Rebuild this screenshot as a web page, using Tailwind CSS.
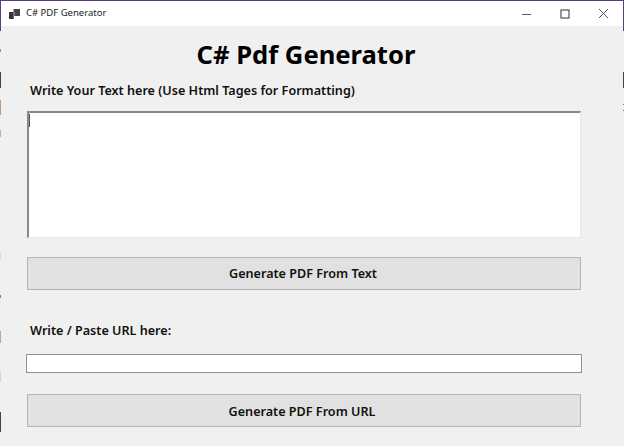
<!doctype html>
<html><head><meta charset="utf-8"><script src="https://cdn.jsdelivr.net/npm/@tailwindcss/browser@4"></script></head>
<body class="relative w-[624px] h-[446px] overflow-hidden bg-[#f0f0f0] font-['Noto_Sans','Open_Sans',sans-serif] text-[#111]">
<header class="h-[26px] bg-white border-t border-[#5b3a86] flex items-center">
  <svg class="ml-[9px] w-[11px] h-[10px]" viewBox="0 0 11 10"><rect x="4.5" y="0" width="6.5" height="7" fill="#444"/><rect x="0" y="3" width="5" height="7" fill="#333"/><path d="M5 3v7" stroke="#fff" stroke-width="0.6"/></svg>
  <span class="ml-[6px] text-[9.5px] text-[#222]">C# PDF Generator</span>
  <div class="ml-auto flex items-center gap-[28px] mr-[15px]">
    <svg class="w-[10px] h-[10px]" viewBox="0 0 10 10"><path d="M0 5.5h9" stroke="#555" stroke-width="1"/></svg>
    <svg class="w-[10px] h-[10px]" viewBox="0 0 10 10"><rect x="1" y="1" width="8" height="8" fill="none" stroke="#444" stroke-width="1.1"/></svg>
    <svg class="w-[11px] h-[11px]" viewBox="0 0 11 11"><path d="M1 1l9 9M10 1l-9 9" stroke="#444" stroke-width="0.9"/></svg>
  </div>
</header>
<main class="pl-[27px] w-[581px]">
  <h1 class="h-[57px] flex items-center justify-center text-[25.6px] font-bold text-black pl-[4px] pt-[1px]">C# Pdf Generator</h1>
  <p class="h-[14px] pt-[2px] flex items-center pl-[3px] text-[12.6px] font-semibold leading-none">Write Your Text here (Use Html Tages for Formatting)</p>
  <div class="mt-[14px] h-[127px] bg-white border-t-2 border-l-2 border-t-[#8a8a8a] border-l-[#8a8a8a] border-r border-b border-r-[#e8e8e8] border-b-[#e8e8e8] relative">
    <span class="absolute left-0 top-[1px] w-px h-[13px] bg-[#555]"></span>
  </div>
  <button class="mt-[19px] w-full h-[33px] pt-[2px] pr-[2px] bg-[#e1e1e1] border border-[#b4b4b4] text-[12.6px] font-semibold">Generate PDF From Text</button>
  <p class="mt-[34px] h-[14px] flex items-center pl-[3px] text-[12.6px] font-semibold leading-none">Write / Paste URL here:</p>
  <div class="mt-[16px] -ml-px w-[556px] h-[19px] bg-white border border-[#8f8f8f]"></div>
  <button class="mt-[21px] w-full h-[33px] pt-[3px] pr-[4px] bg-[#e1e1e1] border border-[#b4b4b4] text-[12.6px] font-semibold">Generate PDF From URL</button>
</main>
<span class="absolute left-0 top-0 w-[1px] h-[31px] bg-[#5b3a86]"></span>
<span class="absolute right-0 top-0 w-[1px] h-[31px] bg-[#5b3a86]"></span>
<span class="absolute left-0 top-[49px] w-[1px] h-[3px] bg-[#6d9bc4]"></span>
<span class="absolute left-0 top-[72px] w-[1px] h-[16px] bg-[#444]"></span>
<span class="absolute right-0 top-[72px] w-[1px] h-[16px] bg-[#444]"></span>
<span class="absolute left-0 top-[100px] w-[1px] h-[15px] bg-[#c09a80]"></span>
<span class="absolute left-0 top-[130px] w-[1px] h-[7px] bg-[#c8b090]"></span>
<span class="absolute right-0 top-[104px] w-[1px] h-[1px] bg-[#777]"></span>
<span class="absolute right-0 top-[110px] w-[1px] h-[1px] bg-[#777]"></span>
<span class="absolute left-0 top-[252px] w-[1px] h-[7px] bg-[#f0d8a8]"></span>
<span class="absolute left-0 top-[295px] w-[1px] h-[3px] bg-[#5a8ab8]"></span>
<span class="absolute left-0 top-[331px] w-[1px] h-[12px] bg-[#b8a8a0]"></span>
<span class="absolute left-0 top-[371px] w-[1px] h-[11px] bg-[#c8d8e8]"></span>
<span class="absolute left-0 top-[412px] w-[1px] h-[20px] bg-[#444]"></span>
</body></html>
